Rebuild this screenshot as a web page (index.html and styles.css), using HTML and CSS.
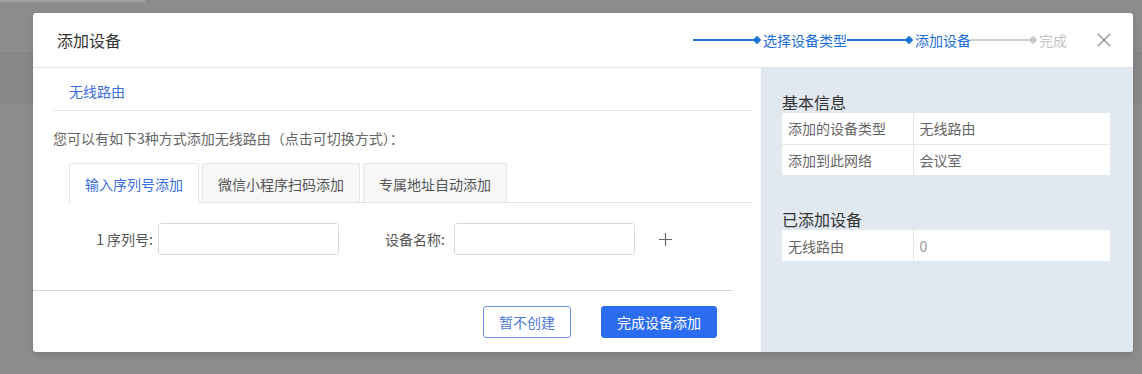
FILE: index.html
```html
<!DOCTYPE html>
<html lang="zh-CN">
<head>
    <meta charset="UTF-8">
    <meta name="viewport" content="width=device-width, initial-scale=1.0">
    <title>添加设备</title>
    <link rel="stylesheet" href="styles.css">
</head>
<body>
    <div class="page">
        <div class="page-top"></div>
        <div class="page-band"></div>
    </div>

    <div class="mask">
        <div class="modal">
            <div class="modal-header">
                <h2>添加设备</h2>
                <div class="steps">
                    <span class="step-line done"></span><span class="dot done"></span><span class="step-text done">选择设备类型</span>
                    <span class="step-line done"></span><span class="dot done"></span><span class="step-text done">添加设备</span>
                    <span class="step-line"></span><span class="dot"></span><span class="step-text">完成</span>
                </div>
                <span class="close">
                    <svg width="14" height="14" viewBox="0 0 14 14"><path d="M1 1L13 13M13 1L1 13" stroke="#8c8c8c" stroke-width="1.3" fill="none"/></svg>
                </span>
            </div>

            <div class="modal-body">
                <div class="main">
                    <div class="content">
                        <div class="sub-title"><span>无线路由</span></div>
                        <p class="hint">您可以有如下3种方式添加无线路由（点击可切换方式）：</p>
                        <div class="tabs">
                            <div class="tab active">输入序列号添加</div>
                            <div class="tab">微信小程序扫码添加</div>
                            <div class="tab">专属地址自动添加</div>
                        </div>
                        <div class="form-row">
                            <label class="label first">1 序列号:</label>
                            <input class="input" type="text">
                            <label class="label">设备名称:</label>
                            <input class="input" type="text">
                            <span class="plus">
                                <svg width="13" height="13" viewBox="0 0 13 13"><path d="M6.5 0V13M0 6.5H13" stroke="#666" stroke-width="1.2" fill="none"/></svg>
                            </span>
                        </div>
                    </div>
                    <div class="footer">
                        <button class="btn btn-ghost">暂不创建</button>
                        <button class="btn btn-primary">完成设备添加</button>
                    </div>
                </div>

                <div class="side">
                    <h3>基本信息</h3>
                    <table class="info">
                        <tr><td>添加的设备类型</td><td>无线路由</td></tr>
                        <tr><td>添加到此网络</td><td>会议室</td></tr>
                    </table>
                    <h3 class="second">已添加设备</h3>
                    <table class="info">
                        <tr><td>无线路由</td><td class="num">0</td></tr>
                    </table>
                </div>
            </div>
        </div>
    </div>
</body>
</html>
```

FILE: styles.css
```css
* { margin: 0; padding: 0; box-sizing: border-box; }
body {
    font-family: "Noto Sans CJK SC", "Liberation Sans", sans-serif;
    background: #8c8c8c;
    color: #333;
    font-size: 14px;
    width: 1142px;
    height: 374px;
    overflow: hidden;
    position: relative;
}

/* page behind the mask */
.page-top { width: 145px; height: 2px; background: #a2a2a2; }
.page-band {
    margin-top: 50px;
    height: 51px;
    background: #888;
    border-top: 1px solid #828282;
    border-bottom: 1px solid #828282;
}

.mask {
    position: absolute;
    inset: 0;
    padding: 13px 0 0 33px;
}
.modal {
    width: 1100px;
    height: 339px;
    background: #fff;
    border-radius: 3px;
    overflow: hidden;
    display: flex;
    flex-direction: column;
    box-shadow: 0 2px 6px rgba(0, 0, 0, 0.15);
}

.modal-header {
    height: 55px;
    flex: none;
    display: flex;
    align-items: center;
    padding: 0 22px 0 24px;
    border-bottom: 1px solid #e6e6e6;
}
.modal-header h2 { font-size: 16px; font-weight: normal; color: #333; flex: 1; }

.steps { display: flex; align-items: center; margin-right: 30px; }
.step-line { width: 61px; height: 2px; background: #d0d0d0; }
.step-line.done { background: #1d6fd8; }
.step-line:first-child { width: 63px; }
.dot {
    width: 6px;
    height: 6px;
    background: #c8c8c8;
    transform: rotate(45deg);
    margin: 0 3px 0 -2px;
}
.dot.done { background: #1d6fd8; }
.step-text { font-size: 14px; color: #c4c4c4; }
.step-text.done { color: #1d6fd8; }
.close { display: flex; width: 14px; height: 14px; }

.modal-body { flex: 1; display: flex; }
.main { width: 728px; display: flex; flex-direction: column; }
.content { padding: 0 8px 0 20px; height: 222px; }

.sub-title {
    height: 43px;
    line-height: 46px;
    padding-left: 16px;
    border-bottom: 1px solid #e6e6e6;
    color: #3a6fd8;
}
.hint { color: #666; margin-top: 17px; line-height: 20px; }

.tabs {
    display: flex;
    gap: 3px;
    margin: 15px 0 0 16px;
    border-bottom: 1px solid #e3e3e3;
}
.tab {
    height: 39px;
    line-height: 40px;
    padding: 0 15px;
    background: #f7f7f7;
    border: 1px solid #e6e6e6;
    border-bottom: none;
    border-radius: 3px 3px 0 0;
    color: #555;
    margin-bottom: -1px;
}
.tab.active { background: #fff; color: #3a6fd8; height: 40px; }

.form-row { display: flex; align-items: center; margin-top: 20px; padding-left: 16px; }
.label { color: #555; margin-right: 9px; }
.label.first { width: 84px; text-align: right; margin-right: 5px; }
.input {
    width: 181px;
    height: 32px;
    border: 1px solid #d9d9d9;
    border-radius: 3px;
    margin-right: 46px;
}
.input + .plus { margin-left: -22px; display: flex; }

.footer {
    width: 700px;
    border-top: 1px solid #d9d9d9;
    display: flex;
    justify-content: flex-end;
    gap: 30px;
    padding: 15px 16px 0 0;
}
.btn {
    font-family: inherit;
    font-size: 14px;
    height: 32px;
    padding: 0 15px;
    border-radius: 3px;
    white-space: nowrap;
    cursor: pointer;
}
.btn-ghost { background: #fff; border: 1px solid #6c93e0; color: #4a78d8; }
.btn-primary { background: #2c6cf0; border: 1px solid #2c6cf0; color: #fff; }

.side {
    flex: 1;
    background: #e1e8ef;
    padding: 23px 23px 0 21px;
}
.side h3 { font-size: 16px; font-weight: normal; color: #333; line-height: 22px; }
.side h3.second { margin-top: 33px; }
.info { width: 100%; border-collapse: collapse; background: #fff; }
.info td {
    height: 31px;
    padding: 0 6px;
    color: #666;
    border-bottom: 1px solid #e6e6e6;
}
.info tr:last-child td { border-bottom: none; }
.info td:first-child { width: 131px; border-right: 1px solid #e6e6e6; }
.info td.num { color: #999; }
```
